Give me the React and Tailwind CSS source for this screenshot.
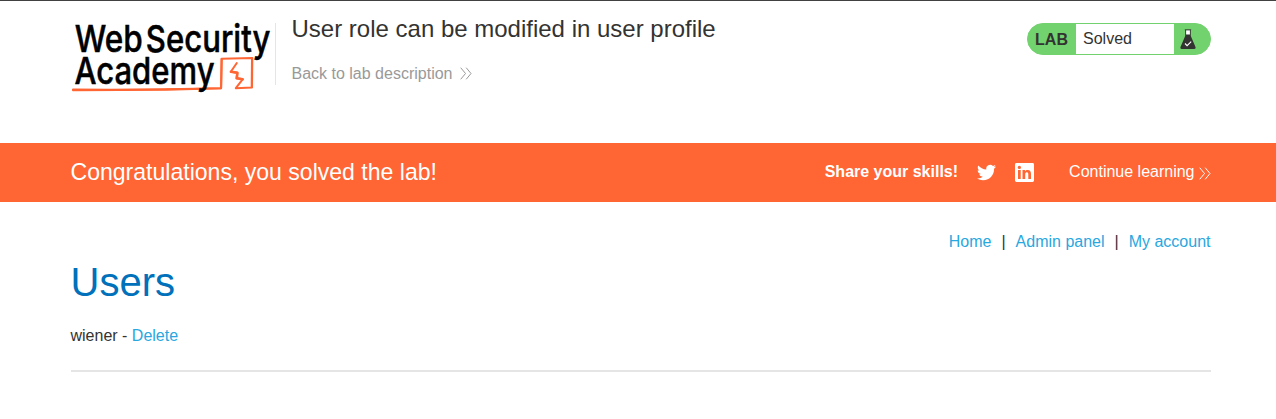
function Chevrons({ className }) {
  return (
    <svg viewBox="0 0 12 13" className={className} fill="none" stroke="currentColor" strokeWidth="1">
      <path d="M0.7 0.7 5.5 6.5 0.7 12.3M6.2 0.7 11 6.5 6.2 12.3" />
    </svg>
  );
}

function Logo() {
  return (
    <svg viewBox="0 0 204 78" className="block h-[78px] w-[204px] shrink-0 overflow-visible" role="img" aria-label="Web Security Academy">
      <g fill="none" stroke="#ff6633" strokeLinecap="round" strokeLinejoin="round">
        <path d="M2 74.6 40 74.8 110 74 150 73.2 150.5 43.8 181.3 43 181 72.6 164.8 73.2 171.8 64.2 165.5 63.3 166.3 57.8 159.8 56.8 165.8 48" strokeWidth="2" />
        <path d="M2 75.2 95 74.8 150 73.2M150.8 44 150.2 73M181 43.4 180.7 72" strokeWidth="2" />
        <path d="M160 56.7 166.4 57.8 165.8 63.3 171.6 64.3" strokeWidth="2.6" />
      </g>
      <g fill="#000" stroke="#000" strokeWidth="0.5" fontFamily="Inter, sans-serif" fontWeight="500" fontSize="37.4">
        <text x="3.8" y="36.6" textLength="68" lengthAdjust="spacingAndGlyphs">Web</text>
        <text x="74.8" y="36.6" textLength="124.5" lengthAdjust="spacingAndGlyphs">Security</text>
        <text x="3.5" y="68.8" textLength="140" lengthAdjust="spacingAndGlyphs">Academy</text>
      </g>
    </svg>
  );
}

function Flask() {
  return (
    <svg viewBox="0 0 16 21" className="h-[21px] w-4" fill="none">
      <path d="M5.2 1V7L0.4 18.3Q0 20 1.7 20H14.3Q16 20 15.6 18.3L10.8 7V1Z" fill="#333332" />
      <path d="M6.1 1.2H9.9V5.5H6.1Z" fill="#fff" />
      <path d="M4.8 0.7H11.2" stroke="#333332" strokeWidth="0.8" />
      <path d="M5 14.5 7.1 16.7 11.2 12.6" stroke="#fff" strokeWidth="1.1" />
    </svg>
  );
}

function Twitter() {
  return (
    <svg viewBox="0 0 24 24" className="h-[19px] w-[19px]" fill="currentColor">
      <path d="M23.954 4.569a10 10 0 0 1-2.825.775 4.958 4.958 0 0 0 2.163-2.723 9.99 9.99 0 0 1-3.127 1.184 4.92 4.92 0 0 0-8.384 4.482C7.691 8.094 4.066 6.13 1.64 3.161a4.822 4.822 0 0 0-.666 2.475c0 1.71.87 3.213 2.188 4.096a4.904 4.904 0 0 1-2.228-.616v.061a4.923 4.923 0 0 0 3.946 4.827 4.996 4.996 0 0 1-2.212.085 4.937 4.937 0 0 0 4.604 3.417 9.868 9.868 0 0 1-6.102 2.105c-.39 0-.779-.023-1.17-.067a13.995 13.995 0 0 0 7.557 2.209c9.054 0 13.999-7.496 13.999-13.986 0-.209 0-.42-.015-.63a9.936 9.936 0 0 0 2.46-2.548z" />
    </svg>
  );
}

function LinkedIn() {
  return (
    <svg viewBox="0 0 19 19" className="h-[19px] w-[19px]">
      <rect width="19" height="19" rx="1.4" fill="#fff" />
      <path d="M3 7.1H5.7V16H3ZM7.5 7.1H10V8.3C10.5 7.4 11.5 6.9 12.7 6.9 15.3 6.9 16 8.6 16 11.1V16H13.3V11.6C13.3 10.3 13.1 9.2 11.8 9.2 10.5 9.2 10.2 10.2 10.2 11.5V16H7.5Z" fill="#ff6633" />
      <circle cx="4.35" cy="4.4" r="1.6" fill="#ff6633" />
    </svg>
  );
}

export default function App() {
  return (
    <div className="h-[419px] overflow-hidden border-t border-[#414141] bg-white font-['Liberation_Sans',Arial,sans-serif] text-base text-[#333332]">
      <header className="flex h-[142px] items-start pr-[65px] pl-[71px]">
        <div className="flex h-[84px] items-end pt-[14px]">
          <div className="h-[70px] w-[204px]">
            <Logo />
          </div>
          <div className="h-[62px] w-px bg-[#e5e5e5]" />
        </div>
        <div className="ml-[15.5px] pt-[14px]">
          <h1 className="text-2xl leading-7">User role can be modified in user profile</h1>
          <a className="mt-[21px] flex items-center gap-2 leading-5 text-[#999]">
            Back to lab description
            <Chevrons className="-mt-0.5 h-[13px] w-3" />
          </a>
        </div>
        <div className="mt-[22px] ml-auto flex h-8 w-[184px] items-stretch overflow-hidden rounded-full border border-[#72d26e] bg-[#72d26e]">
          <p className="flex w-12 items-center justify-center pt-px pr-px font-bold">LAB</p>
          <p className="w-[98px] bg-white pl-[7px] leading-[30px]">Solved</p>
          <div className="pt-[5px] pl-[6px]">
            <Flask />
          </div>
        </div>
      </header>

      <section className="flex h-[59px] items-center bg-[#ff6633] pr-[65.5px] pb-0.5 pl-[70.5px] text-white">
        <h2 className="pt-px text-[23.05px] leading-7">Congratulations, you solved the lab!</h2>
        <div className="ml-auto flex items-center">
          <span className="font-bold">Share your skills!</span>
          <span className="ml-[19px] pt-0.5"><Twitter /></span>
          <span className="ml-[19px] pt-0.5"><LinkedIn /></span>
          <a className="ml-[35px] flex items-center gap-1">
            Continue learning
            <Chevrons className="mt-[3px] h-[13px] w-3" />
          </a>
        </div>
      </section>

      <main className="mr-[65px] ml-[71px] pt-[28px]">
        <nav className="flex justify-end gap-[10px] pr-[0.5px] leading-6">
          <a className="text-[#29a7df]">Home</a>
          <span>|</span>
          <a className="text-[#29a7df]">Admin panel</a>
          <span>|</span>
          <a className="text-[#29a7df]">My account</a>
        </nav>
        <h1 className="mt-1 -ml-[0.5px] text-[40px] leading-[48px] text-[#0071ba]">Users</h1>
        <p className="mt-[18px] -ml-[0.5px] leading-6">
          wiener - <a className="text-[#29a7df]">Delete</a>
        </p>
        <hr className="mt-[22px] border-t-2 border-[#e5e5e5]" />
      </main>
    </div>
  );
}
